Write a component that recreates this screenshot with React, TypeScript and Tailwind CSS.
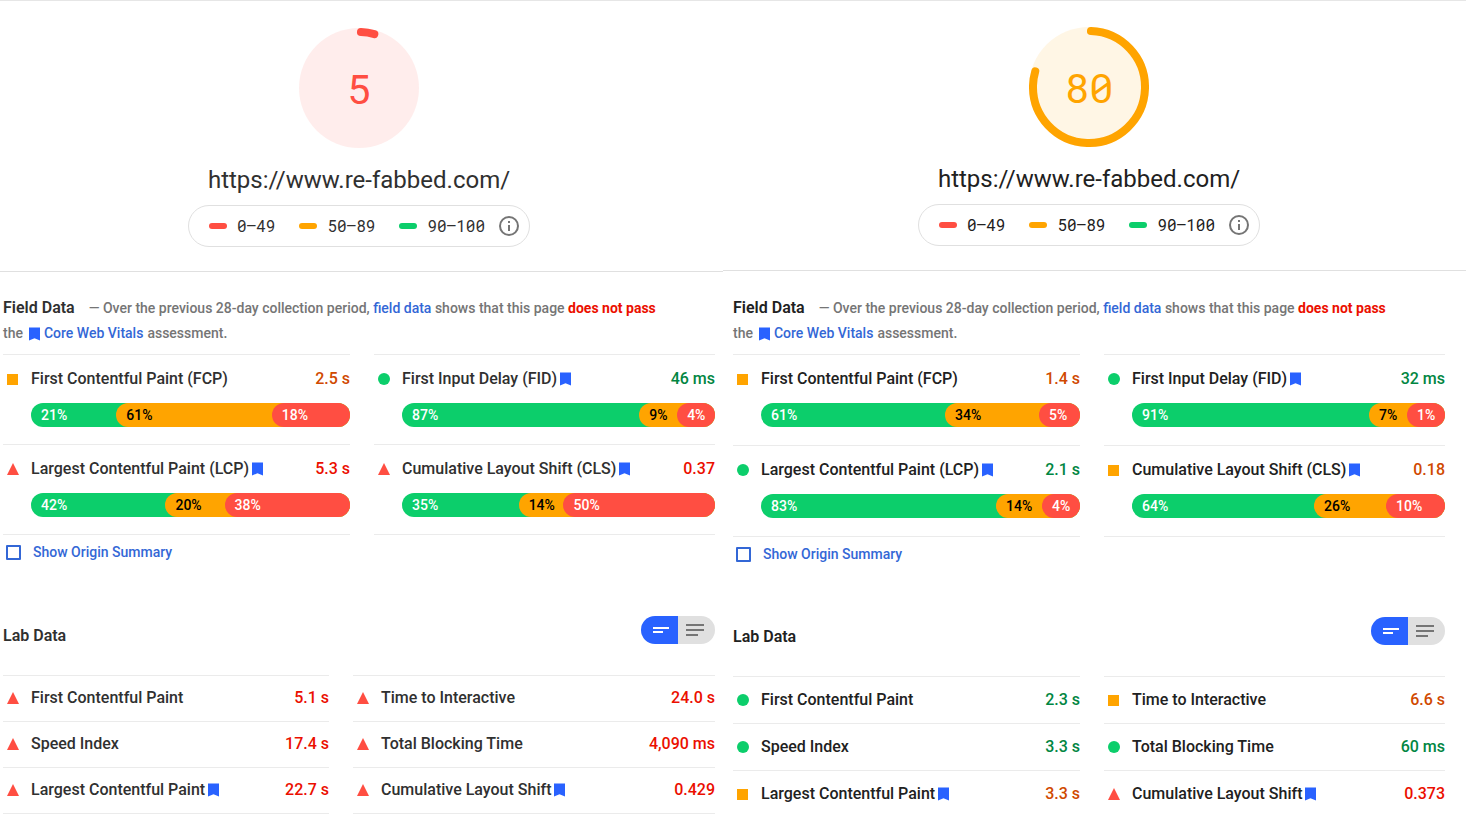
import React from "react";

type Rating = "good" | "average" | "poor";

interface LabMetric {
  name: string;
  rating: Rating;
  value: string;
  vital?: boolean;
}

interface FieldMetric extends LabMetric {
  labels: [string, string, string];
  // visible share of every segment, tiny percentages keep a minimum width
  shares: [number, number, number];
}

interface Report {
  id: string;
  score: number;
  rating: Rating;
  field: FieldMetric[];
  lab: LabMetric[];
  look: {
    panel: string;
    header: string;
    intro: string;
    text: string;
    fieldGrid: string;
    fieldRow: string;
    lab: string;
    labGrid: string;
    labRow: string;
  };
}

const MOBILE: Report = {
  id: "mobile",
  score: 5,
  rating: "poor",
  field: [
    { name: "First Contentful Paint (FCP)", rating: "average", value: "2.5 s", labels: ["21%", "61%", "18%"], shares: [85, 155, 78] },
    { name: "First Input Delay (FID)", rating: "good", value: "46 ms", vital: true, labels: ["87%", "9%", "4%"], shares: [238, 38, 38] },
    { name: "Largest Contentful Paint (LCP)", rating: "poor", value: "5.3 s", vital: true, labels: ["42%", "20%", "38%"], shares: [134, 59, 125] },
    { name: "Cumulative Layout Shift (CLS)", rating: "poor", value: "0.37", vital: true, labels: ["35%", "14%", "50%"], shares: [117, 45, 152] },
  ],
  lab: [
    { name: "First Contentful Paint", rating: "poor", value: "5.1 s" },
    { name: "Time to Interactive", rating: "poor", value: "24.0 s" },
    { name: "Speed Index", rating: "poor", value: "17.4 s" },
    { name: "Total Blocking Time", rating: "poor", value: "4,090 ms" },
    { name: "Largest Contentful Paint", rating: "poor", value: "22.7 s", vital: true },
    { name: "Cumulative Layout Shift", rating: "poor", value: "0.429", vital: true },
  ],
  look: {
    panel: "pl-[3px] pr-2",
    header: "pt-[27px] -ml-[3px] pl-[3px] -mr-2 pr-2",
    intro: "pt-[23px]",
    text: "text-[#303030]",
    fieldGrid: "grid-cols-[347fr_341fr]",
    fieldRow: "pb-[17px]",
    lab: "pt-[52px]",
    labGrid: "grid-cols-[326fr_362fr]",
    labRow: "pt-[10px] pb-[11px]",
  },
};

const DESKTOP: Report = {
  id: "desktop",
  score: 80,
  rating: "average",
  field: [
    { name: "First Contentful Paint (FCP)", rating: "average", value: "1.4 s", labels: ["61%", "34%", "5%"], shares: [184, 94, 41] },
    { name: "First Input Delay (FID)", rating: "good", value: "32 ms", vital: true, labels: ["91%", "7%", "1%"], shares: [237, 38, 38] },
    { name: "Largest Contentful Paint (LCP)", rating: "good", value: "2.1 s", vital: true, labels: ["83%", "14%", "4%"], shares: [235, 46, 38] },
    { name: "Cumulative Layout Shift (CLS)", rating: "average", value: "0.18", vital: true, labels: ["64%", "26%", "10%"], shares: [182, 72, 59] },
  ],
  lab: [
    { name: "First Contentful Paint", rating: "good", value: "2.3 s" },
    { name: "Time to Interactive", rating: "average", value: "6.6 s" },
    { name: "Speed Index", rating: "good", value: "3.3 s" },
    { name: "Total Blocking Time", rating: "good", value: "60 ms" },
    { name: "Largest Contentful Paint", rating: "average", value: "3.3 s", vital: true },
    { name: "Cumulative Layout Shift", rating: "poor", value: "0.373", vital: true },
  ],
  look: {
    panel: "pl-[10px] pr-[21px]",
    header: "pt-[26px] -ml-[10px] pl-[10px] -mr-[21px] pr-[21px]",
    intro: "pt-6",
    text: "text-[#212121]",
    fieldGrid: "grid-cols-[347fr_341fr]",
    fieldRow: "pb-[18px]",
    lab: "pt-[51px]",
    labGrid: "grid-cols-[347fr_341fr]",
    labRow: "pt-[11px] pb-[11px]",
  },
};

const FILL: Record<Rating, string> = {
  good: "#0cce6b",
  average: "#ffa400",
  poor: "#ff4e42",
};

const VALUE_COLOR: Record<Rating, string> = {
  good: "text-[#018642]",
  average: "text-[#d04900]",
  poor: "text-[#eb0f00]",
};

const Bookmark: React.FC = () => (
  <svg className="inline-block shrink-0" width="11" height="14" viewBox="0 0 11 14" aria-hidden="true">
    <path d="M0 0.5H11V13.5L5.5 11.2L0 13.5Z" fill="#2962ff" />
  </svg>
);

const Marker: React.FC<{ rating: Rating }> = ({ rating }) => (
  <svg className="shrink-0" width="12" height="12" viewBox="0 0 12 12" aria-hidden="true">
    {rating === "good" && <circle cx="6" cy="6" r="6" fill={FILL.good} />}
    {rating === "average" && <rect x="0" y="1" width="11" height="11" fill={FILL.average} />}
    {rating === "poor" && <path d="M6 0L12 12H0Z" fill={FILL.poor} />}
  </svg>
);

const Gauge: React.FC<{ score: number; rating: Rating }> = ({ score, rating }) => {
  const length = 2 * Math.PI * 56;
  return (
    <svg width="120" height="120" viewBox="0 0 120 120" role="img" aria-label={`${score}`}>
      <circle cx="60" cy="60" r="60" fill={FILL[rating]} fillOpacity="0.1" />
      <circle
        cx="60"
        cy="60"
        r="56"
        fill="none"
        stroke={FILL[rating]}
        strokeWidth="8"
        strokeLinecap="round"
        strokeDasharray={`${(score / 100) * length - 4} ${length}`}
        transform="rotate(-88 60 60)"
      />
      <text
        x="60"
        y="76"
        textAnchor="middle"
        fill={FILL[rating]}
        className="font-['Roboto_Mono','Liberation_Mono',monospace] text-[41px]"
      >
        {score}
      </text>
    </svg>
  );
};

const Legend: React.FC = () => (
  <div className="flex h-[42px] items-center rounded-full border border-[#e0e0e0] pr-[10px] pl-5 font-['Roboto_Mono','Liberation_Mono',monospace] text-base">
    <span className="mr-[10px] h-[6px] w-[18px] rounded-full bg-[#ff4e42]" />
    <span className="mr-6">0–49</span>
    <span className="mr-[10px] h-[6px] w-[18px] rounded-full bg-[#ffa400]" />
    <span className="mr-6">50–89</span>
    <span className="mr-[10px] h-[6px] w-[18px] rounded-full bg-[#0cce6b]" />
    <span className="mr-[14px]">90–100</span>
    <button type="button" aria-label="Score scale" className="size-5">
      <svg width="20" height="20" viewBox="0 0 20 20" aria-hidden="true">
        <circle cx="10" cy="10" r="9" fill="none" stroke="#757575" strokeWidth="2" />
        <path d="M9 5H11V7H9ZM9 9H11V15H9Z" fill="#757575" />
      </svg>
    </button>
  </div>
);

const Distribution: React.FC<Pick<FieldMetric, "labels" | "shares">> = ({ labels, shares }) => {
  const [good, average, poor] = shares;
  return (
    <div className="mt-3 ml-7 flex h-6 rounded-full bg-[#0cce6b] text-sm leading-6 font-medium">
      <span className="min-w-0 basis-0 indent-[10px] text-white" style={{ flexGrow: good }}>
        {labels[0]}
      </span>
      <div className="flex min-w-0 basis-0 rounded-full bg-[#ffa400]" style={{ flexGrow: average + poor }}>
        <span className="min-w-0 basis-0 indent-[10px] text-black" style={{ flexGrow: average }}>
          {labels[1]}
        </span>
        <span className="min-w-0 basis-0 rounded-full bg-[#ff4e42] indent-[10px] text-white" style={{ flexGrow: poor }}>
          {labels[2]}
        </span>
      </div>
    </div>
  );
};

const MetricLine: React.FC<{ metric: LabMetric }> = ({ metric }) => (
  <div className="flex items-center leading-6 font-medium">
    <span className="w-7 shrink-0 pl-1">
      <Marker rating={metric.rating} />
    </span>
    <span className="flex items-center gap-[3px]">
      {metric.name}
      {metric.vital && <Bookmark />}
    </span>
    <span className={`ml-auto ${VALUE_COLOR[metric.rating]}`}>{metric.value}</span>
  </div>
);

const ReportPanel: React.FC<{ report: Report }> = ({ report }) => {
  const { look } = report;
  return (
    <section className={`${look.panel} ${look.text}`}>
      <header className={`flex flex-col items-center border-b border-[#e0e0e0] pb-6 ${look.header}`}>
        <Gauge score={report.score} rating={report.rating} />
        <h1 className="mt-4 mb-[9px] text-2xl leading-8">https://www.re-fabbed.com/</h1>
        <Legend />
      </header>

      <div className={`pb-2 text-sm leading-[25px] font-medium text-[#757575] ${look.intro}`}>
        <h2 className={`mr-[14px] inline text-base leading-[25px] font-semibold ${look.text}`}>Field Data</h2>
        — Over the previous 28-day collection period,{" "}
        <a href="#field-data" className="text-[#3367d6]">field data</a> shows that this page{" "}
        <strong className="font-bold text-[#eb0f00]">does not pass</strong>
        <div className="flex items-center">
          the
          <a href="#core-web-vitals" className="mr-1 ml-[6px] flex items-center gap-1 text-[#3367d6]">
            <Bookmark />
            Core Web Vitals
          </a>
          assessment.
        </div>
      </div>

      <ul className={`grid gap-x-6 ${look.fieldGrid}`}>
        {report.field.map((metric) => (
          <li key={metric.name} className={`border-t border-[#ebebeb] pt-3 ${look.fieldRow}`}>
            <MetricLine metric={metric} />
            <Distribution labels={metric.labels} shares={metric.shares} />
          </li>
        ))}
        <li className="border-t border-[#ebebeb]" />
        <li className="border-t border-[#ebebeb]" />
      </ul>

      <label className="flex items-center pt-[5px] text-sm leading-6 font-medium text-[#3367d6]">
        <input type="checkbox" className="mr-3 ml-[3px] size-[15px] appearance-none rounded-[1px] border-2 border-[#3367d6]" />
        Show Origin Summary
      </label>

      <div className={`flex items-start justify-between pb-[27px] ${look.lab}`}>
        <h2 className="mt-2 text-base font-semibold">Lab Data</h2>
        <div className="flex h-7 overflow-hidden rounded-full">
          <button type="button" aria-label="Compact view" className="flex w-[37px] items-center justify-center bg-[#2962ff] pl-[2px]">
            <svg width="18" height="14" viewBox="0 0 18 14" aria-hidden="true">
              <path d="M1 4H17V6H1ZM1 8H11V10H1Z" fill="#fff" />
            </svg>
          </button>
          <button type="button" aria-label="Expanded view" className="flex w-[37px] items-center justify-center bg-[#e0e0e0] pr-[3px]">
            <svg width="18" height="14" viewBox="0 0 18 14" aria-hidden="true">
              <path d="M0 1H18V3H0ZM0 6H18V8H0ZM0 11H12V13H0Z" fill="#757575" />
            </svg>
          </button>
        </div>
      </div>

      <ul className={`grid gap-x-6 ${look.labGrid}`}>
        {report.lab.map((metric) => (
          <li key={metric.name} className={`border-t border-[#ebebeb] ${look.labRow}`}>
            <MetricLine metric={metric} />
          </li>
        ))}
        <li className="border-t border-[#ebebeb]" />
        <li className="border-t border-[#ebebeb]" />
      </ul>
    </section>
  );
};

export default function App() {
  return (
    <main className="grid h-screen grid-cols-[723fr_743fr] overflow-hidden border-t border-[#e6e6e6] bg-white font-['Roboto',sans-serif] text-base">
      <ReportPanel report={MOBILE} />
      <ReportPanel report={DESKTOP} />
    </main>
  );
}
